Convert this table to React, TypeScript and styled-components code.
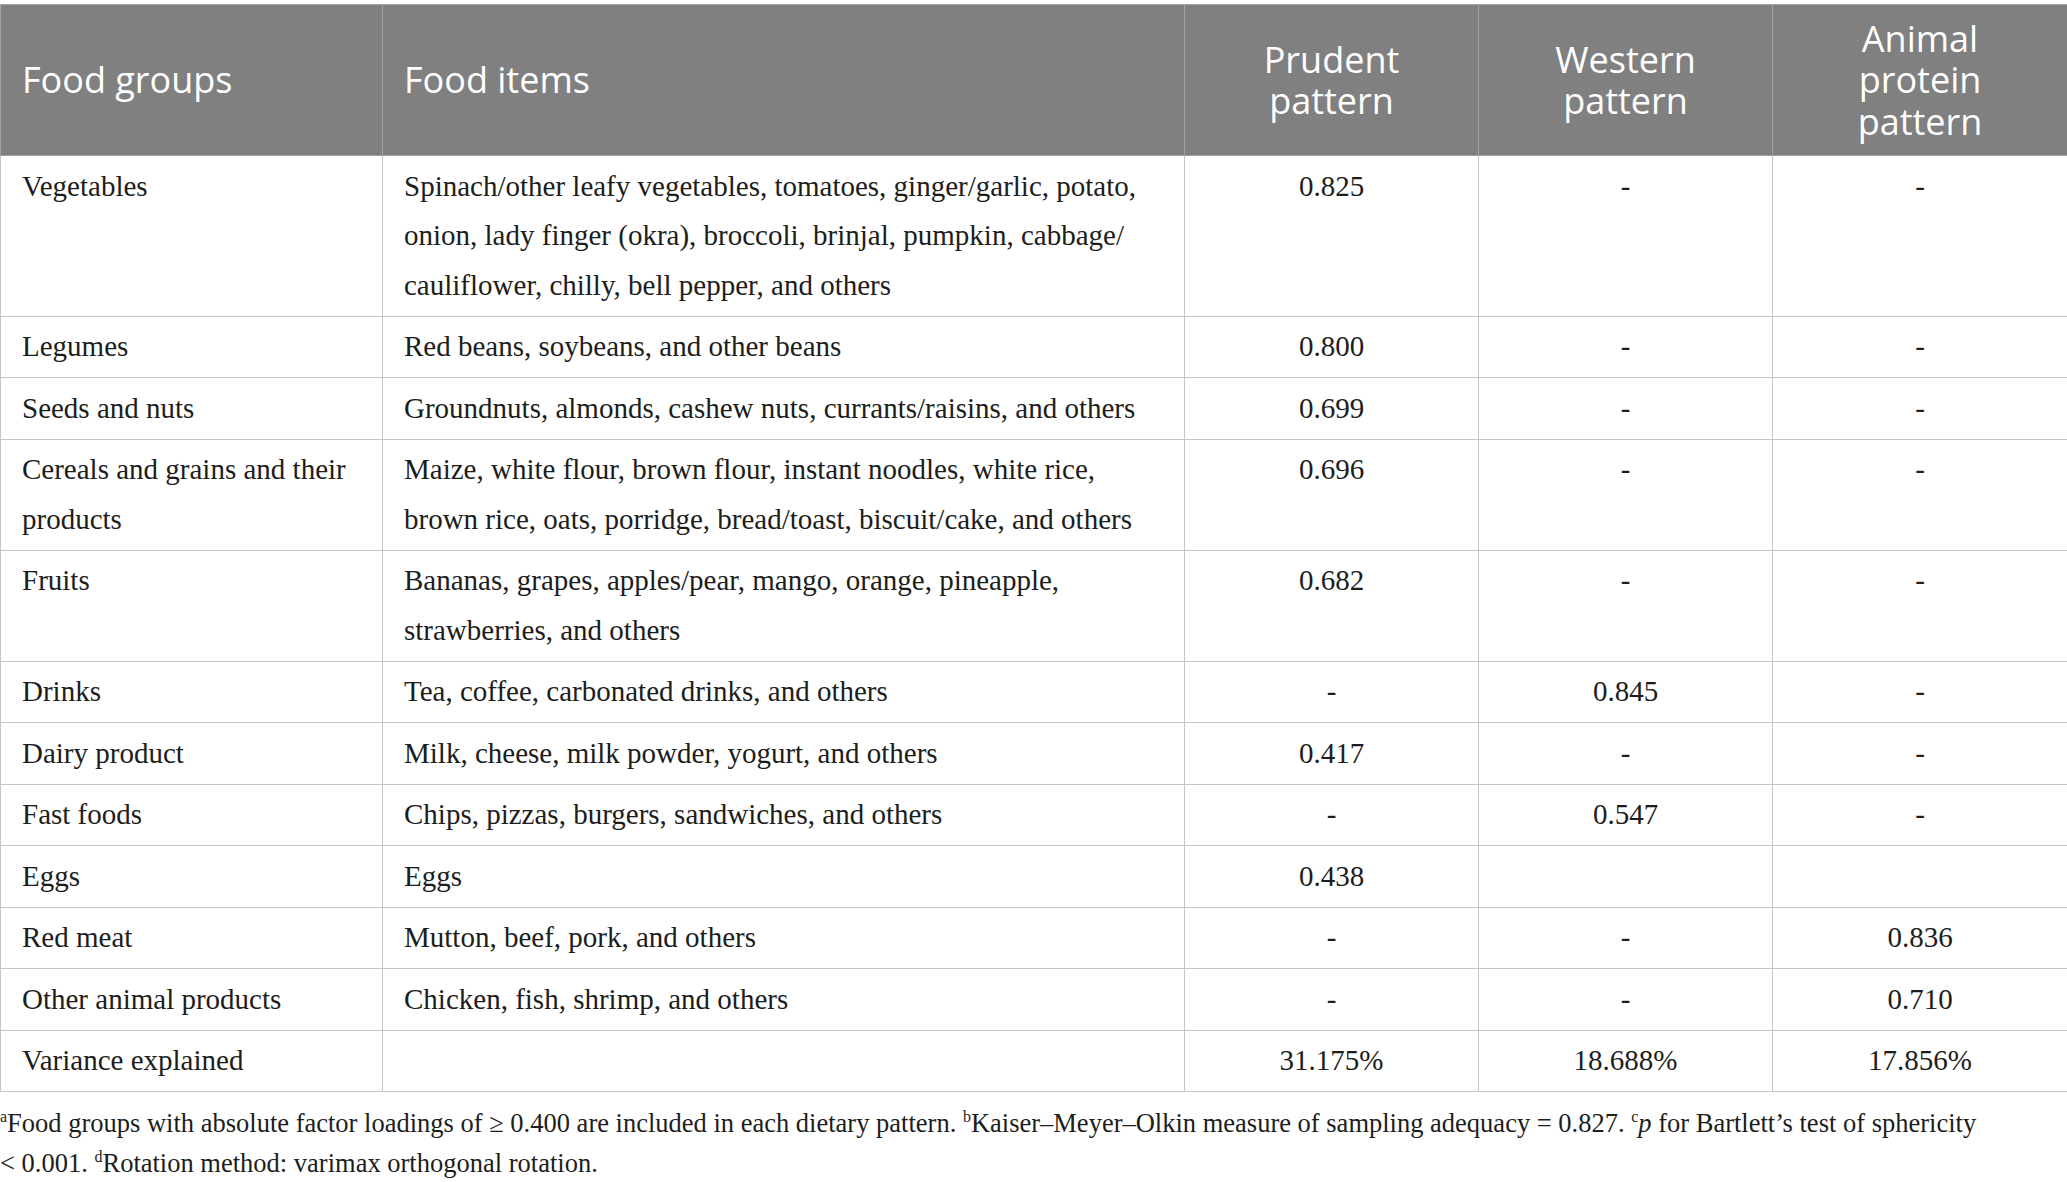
import React from "react";
import styled, { createGlobalStyle } from "styled-components";

const Global = createGlobalStyle`
  html, body { margin: 0; padding: 0; background: #ffffff; }
  body { font-family: "Liberation Serif", serif; color: #1d1d1b; }
`;

const Page = styled.div`
  padding-top: 4px;
  width: 2067px;
`;

const Table = styled.table`
  width: 2067px;
  border-collapse: collapse;
  table-layout: fixed;
`;

const HeadCell = styled.th<{ $align?: "left" | "center" }>`
  background: #7f807f;
  color: #ffffff;
  font-family: "Open Sans", "Noto Sans", sans-serif;
  font-weight: 400;
  font-size: 36px;
  line-height: 41.5px;
  height: 151px;
  padding: 0 21px;
  box-sizing: border-box;
  text-align: ${(p) => p.$align ?? "left"};
  vertical-align: middle;
  border: 1px solid #a3a3a3;
`;

const Row = styled.tr``;

const Cell = styled.td<{ $center?: boolean }>`
  font-family: "Liberation Serif", serif;
  font-size: 29px;
  line-height: 49.5px;
  padding: 5.5px 21px;
  text-align: ${(p) => (p.$center ? "center" : "left")};
  vertical-align: top;
  border: 1px solid #c6c6c6;
`;

const Footnote = styled.p`
  margin: 11px 0 0;
  font-family: "Liberation Serif", serif;
  font-size: 26.5px;
  line-height: 40px;
  color: #1d1d1b;
  white-space: nowrap;
`;

const Sup = styled.sup`
  font-size: 16px;
  vertical-align: 10px;
  line-height: 0;
`;

type RowData = { group: string; items: string; p: string; w: string; a: string };

const rows: RowData[] = [
  {
    group: "Vegetables",
    items:
      "Spinach/other leafy vegetables, tomatoes, ginger/garlic, potato, onion, lady finger (okra), broccoli, brinjal, pumpkin, cabbage/ cauliflower, chilly, bell pepper, and others",
    p: "0.825",
    w: "-",
    a: "-",
  },
  { group: "Legumes", items: "Red beans, soybeans, and other beans", p: "0.800", w: "-", a: "-" },
  {
    group: "Seeds and nuts",
    items: "Groundnuts, almonds, cashew nuts, currants/raisins, and others",
    p: "0.699",
    w: "-",
    a: "-",
  },
  {
    group: "Cereals and grains and their products",
    items:
      "Maize, white flour, brown flour, instant noodles, white rice, brown rice, oats, porridge, bread/toast, biscuit/cake, and others",
    p: "0.696",
    w: "-",
    a: "-",
  },
  {
    group: "Fruits",
    items: "Bananas, grapes, apples/pear, mango, orange, pineapple, strawberries, and others",
    p: "0.682",
    w: "-",
    a: "-",
  },
  { group: "Drinks", items: "Tea, coffee, carbonated drinks, and others", p: "-", w: "0.845", a: "-" },
  { group: "Dairy product", items: "Milk, cheese, milk powder, yogurt, and others", p: "0.417", w: "-", a: "-" },
  { group: "Fast foods", items: "Chips, pizzas, burgers, sandwiches, and others", p: "-", w: "0.547", a: "-" },
  { group: "Eggs", items: "Eggs", p: "0.438", w: "", a: "" },
  { group: "Red meat", items: "Mutton, beef, pork, and others", p: "-", w: "-", a: "0.836" },
  { group: "Other animal products", items: "Chicken, fish, shrimp, and others", p: "-", w: "-", a: "0.710" },
  { group: "Variance explained", items: "", p: "31.175%", w: "18.688%", a: "17.856%" },
];

export default function App() {
  return (
    <Page>
      <Global />
      <Table>
        <colgroup>
          <col style={{ width: 382 }} />
          <col style={{ width: 802 }} />
          <col style={{ width: 294 }} />
          <col style={{ width: 294 }} />
          <col style={{ width: 295 }} />
        </colgroup>
        <thead>
          <tr>
            <HeadCell>Food groups</HeadCell>
            <HeadCell>Food items</HeadCell>
            <HeadCell $align="center">
              Prudent
              <br />
              pattern
            </HeadCell>
            <HeadCell $align="center">
              Western
              <br />
              pattern
            </HeadCell>
            <HeadCell $align="center">
              Animal
              <br />
              protein
              <br />
              pattern
            </HeadCell>
          </tr>
        </thead>
        <tbody>
          {rows.map((r) => (
            <Row key={r.group}>
              <Cell>{r.group}</Cell>
              <Cell>{r.items}</Cell>
              <Cell $center>{r.p}</Cell>
              <Cell $center>{r.w}</Cell>
              <Cell $center>{r.a}</Cell>
            </Row>
          ))}
        </tbody>
      </Table>
      <Footnote>
        <Sup>a</Sup>Food groups with absolute factor loadings of ≥ 0.400 are included in each dietary
        pattern. <Sup>b</Sup>Kaiser–Meyer–Olkin measure of sampling adequacy = 0.827.{" "}
        <Sup>c</Sup>
        <i>p</i> for Bartlett’s test of sphericity
        <br />
        &lt; 0.001. <Sup>d</Sup>Rotation method: varimax orthogonal rotation.
      </Footnote>
    </Page>
  );
}
